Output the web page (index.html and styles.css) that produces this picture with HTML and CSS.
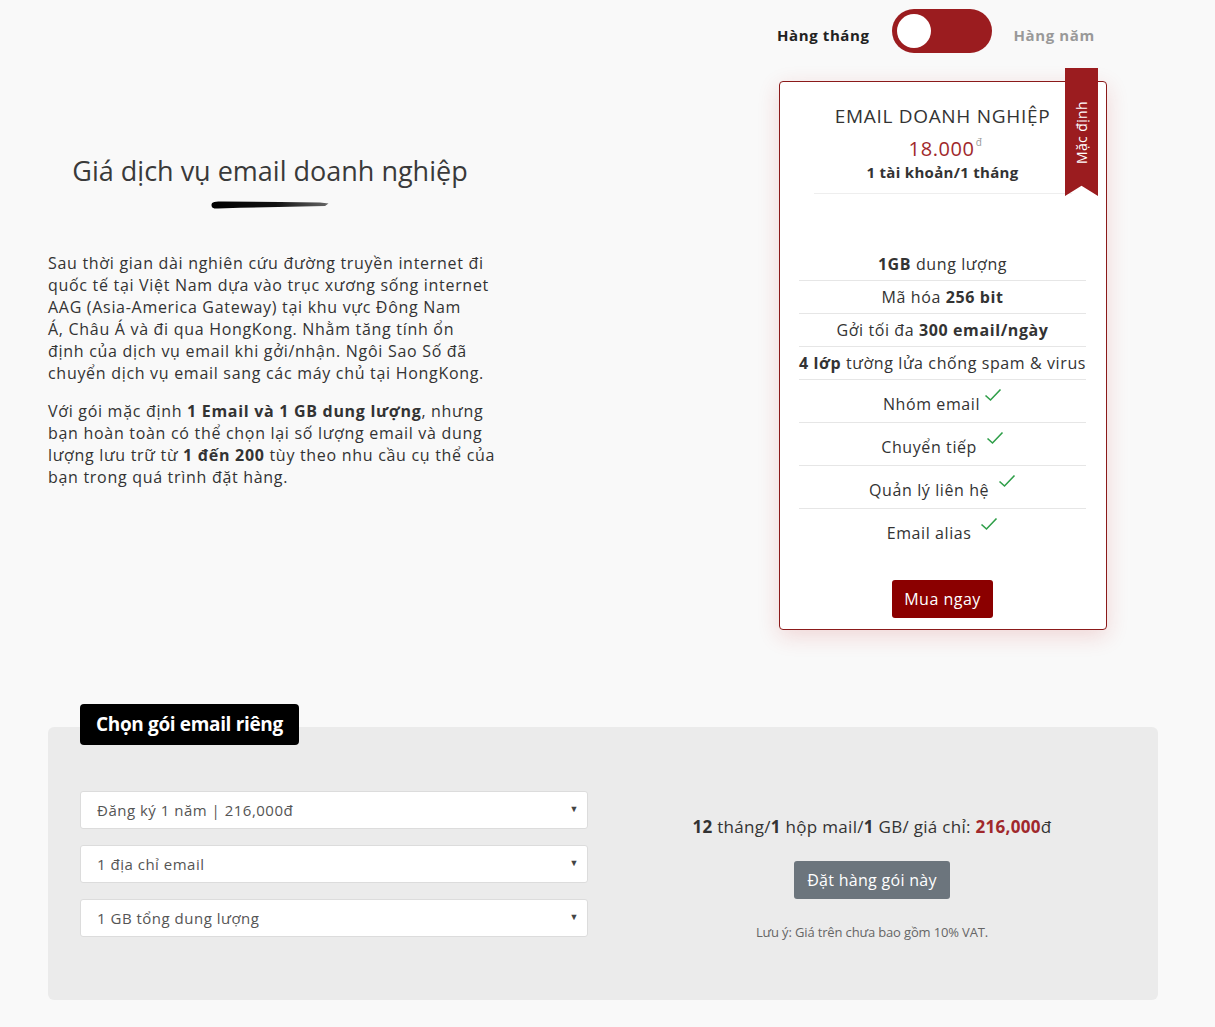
FILE: index.html
```html
<!DOCTYPE html>
<html lang="vi">
<head>
    <meta charset="UTF-8">
    <meta name="viewport" content="width=device-width, initial-scale=1.0">
    <title>Giá dịch vụ email doanh nghiệp</title>
    <link rel="stylesheet" href="styles.css">
</head>
<body>

    <div class="page">
        <div class="top">
            <div class="intro">
                <h2 class="intro-title">Giá dịch vụ email doanh nghiệp</h2>
                <svg class="brush" width="120" height="10" viewBox="0 0 120 10">
                    <defs>
                        <linearGradient id="fade" x1="0" x2="1" y1="0" y2="0">
                            <stop offset="0" stop-color="#000"/>
                            <stop offset="0.55" stop-color="#111"/>
                            <stop offset="1" stop-color="#666"/>
                        </linearGradient>
                    </defs>
                    <path d="M1.5 5 C1.5 2 5 1.6 14 1.6 L70 2 L110 2.4 L118.5 3.4 L115 6 L80 6.8 L30 7.8 L8 8.6 C3 8.8 1.5 7.6 1.5 5 Z" fill="url(#fade)"/>
                </svg>

                <div class="intro-text">
                    <p>Sau thời gian dài nghiên cứu đường truyền internet đi<br>
                    quốc tế tại Việt Nam dựa vào trục xương sống internet<br>
                    AAG (Asia-America Gateway) tại khu vực Đông Nam<br>
                    Á, Châu Á và đi qua HongKong. Nhằm tăng tính ổn<br>
                    định của dịch vụ email khi gởi/nhận. Ngôi Sao Số đã<br>
                    chuyển dịch vụ email sang các máy chủ tại HongKong.</p>
                    <p>Với gói mặc định <b>1 Email và 1 GB dung lượng</b>, nhưng<br>
                    bạn hoàn toàn có thể chọn lại số lượng email và dung<br>
                    lượng lưu trữ từ <b>1 đến 200</b> tùy theo nhu cầu cụ thể của<br>
                    bạn trong quá trình đặt hàng.</p>
                </div>
            </div>

            <div class="pricing">
                <div class="period-switch">
                    <span class="period active">Hàng tháng</span>
                    <span class="switch"><span class="knob"></span></span>
                    <span class="period">Hàng năm</span>
                </div>

                <div class="plan-card">
                    <div class="ribbon"><span>Mặc định</span></div>
                    <h3 class="plan-name">EMAIL DOANH NGHIỆP</h3>
                    <div class="plan-price">18.000<sup>đ</sup></div>
                    <div class="plan-unit">1 tài khoản/1 tháng</div>
                    <hr>

                    <ul class="features">
                        <li><b>1GB</b> dung lượng</li>
                        <li>Mã hóa <b>256 bit</b></li>
                        <li>Gởi tối đa <b>300 email/ngày</b></li>
                        <li><b>4 lớp</b> tường lửa chống spam &amp; virus</li>
                        <li class="check">Nhóm email<svg class="tick" width="18" height="14" viewBox="0 0 18 14"><path d="M1.5 7.5 L6.5 12 L16.5 1.5" fill="none" stroke="#2e9e48" stroke-width="1.6"/></svg></li>
                        <li class="check">Chuyển tiếp <svg class="tick" width="18" height="14" viewBox="0 0 18 14"><path d="M1.5 7.5 L6.5 12 L16.5 1.5" fill="none" stroke="#2e9e48" stroke-width="1.6"/></svg></li>
                        <li class="check">Quản lý liên hệ <svg class="tick" width="18" height="14" viewBox="0 0 18 14"><path d="M1.5 7.5 L6.5 12 L16.5 1.5" fill="none" stroke="#2e9e48" stroke-width="1.6"/></svg></li>
                        <li class="check">Email alias <svg class="tick" width="18" height="14" viewBox="0 0 18 14"><path d="M1.5 7.5 L6.5 12 L16.5 1.5" fill="none" stroke="#2e9e48" stroke-width="1.6"/></svg></li>
                    </ul>

                    <button class="buy-btn">Mua ngay</button>
                </div>
            </div>
        </div>

        <div class="custom-panel">
            <div class="panel-tab">Chọn gói email riêng</div>
            <div class="panel-body">
                <div class="options">
                    <div class="select-box">
                        <select>
                            <option>Đăng ký 1 năm | 216,000đ</option>
                            <option>Đăng ký 2 năm | 432,000đ</option>
                        </select>
                    </div>
                    <div class="select-box">
                        <select>
                            <option>1 địa chỉ email</option>
                            <option>2 địa chỉ email</option>
                        </select>
                    </div>
                    <div class="select-box">
                        <select>
                            <option>1 GB tổng dung lượng</option>
                            <option>2 GB tổng dung lượng</option>
                        </select>
                    </div>
                </div>

                <div class="summary">
                    <p class="summary-line"><b>12</b> tháng/<b>1</b> hộp mail/<b>1</b> GB/ giá chỉ: <b class="red">216,000</b>đ</p>
                    <button class="order-btn">Đặt hàng gói này</button>
                    <p class="note">Lưu ý: Giá trên chưa bao gồm 10% VAT.</p>
                </div>
            </div>
        </div>
    </div>

</body>
</html>
```

FILE: styles.css
```css
body {
    margin: 0;
    background: #f9f9f9;
    font-family: "Open Sans", Lato, sans-serif;
    color: #333;
    letter-spacing: 0.6px;
}
.page {
    width: 1110px;
    margin-left: 48px;
    padding-top: 9px;
    padding-bottom: 30px;
}
.top {
    display: flex;
}
.intro {
    width: 444px;
    text-align: center;
}
.intro-title {
    margin: 145px 0 0;
    font-size: 27px;
    font-weight: 400;
    line-height: 34px;
    letter-spacing: 0;
    color: #3a3a3a;
}
.brush {
    display: block;
    margin: 12px auto 0;
}
.intro-text {
    margin-top: 42px;
    text-align: left;
    white-space: nowrap;
    font-size: 16px;
    line-height: 22px;
    letter-spacing: 0.7px;
    color: #333;
}
.intro-text p {
    margin: 0 0 16px;
}
.pricing {
    width: 328px;
    margin-left: auto;
    margin-right: 51px;
}
.period-switch {
    display: flex;
    align-items: center;
    gap: 22px;
    margin-left: -2px;
}
.period {
    margin-top: 8px;
    font-size: 15px;
    font-weight: 700;
    color: #999;
}
.period.active {
    color: #222;
}
.switch {
    width: 100px;
    height: 44px;
    border-radius: 22px;
    background: #9b1c1f;
    position: relative;
}
.knob {
    position: absolute;
    left: 5px;
    top: 5px;
    width: 34px;
    height: 34px;
    border-radius: 50%;
    background: #fff;
}
.plan-card {
    position: relative;
    margin-top: 28px;
    background: #fff;
    border: 1px solid #8b1a1a;
    border-radius: 4px;
    box-shadow: 0 6px 22px rgba(200, 30, 30, 0.16);
    padding: 20px 20px 11px 19px;
    text-align: center;
}
.ribbon {
    position: absolute;
    top: -14px;
    right: 8px;
    width: 33px;
    height: 128px;
    background: #9b1c1f;
    clip-path: polygon(0 0, 100% 0, 100% 100%, 50% 92%, 0 100%);
    display: flex;
    align-items: center;
    justify-content: center;
}
.ribbon span {
    color: #fff;
    font-size: 14px;
    letter-spacing: 0.4px;
    white-space: nowrap;
    transform: rotate(-90deg);
}
.plan-name {
    margin: 0;
    font-size: 19px;
    font-weight: 400;
    line-height: 28px;
    letter-spacing: 0.7px;
    color: #333;
}
.plan-price {
    font-size: 20px;
    line-height: 24px;
    color: #a0282b;
    margin-left: 6px;
}
.plan-price sup {
    font-size: 10px;
    color: #999;
    vertical-align: 10px;
    margin-left: 1px;
}
.plan-unit {
    font-size: 15px;
    font-weight: 700;
    line-height: 22px;
    letter-spacing: 0.3px;
    color: #333;
}
.plan-card hr {
    border: none;
    border-top: 1px solid #eee;
    margin: 10px 14px 0 15px;
}
.features {
    list-style: none;
    margin: 54px 0 0;
    padding: 0;
    font-size: 16px;
    color: #333;
}
.features li {
    height: 32px;
    line-height: 32px;
    border-bottom: 1px solid #e6e6e6;
    white-space: nowrap;
}
.features li.check {
    height: 42px;
    line-height: 48px;
}
.features li:last-child {
    border-bottom: none;
}
.tick {
    vertical-align: 8px;
    margin-left: 4px;
}
.buy-btn {
    margin-top: 29px;
    height: 38px;
    padding: 0 12px;
    background: #8b0000;
    color: #fff;
    border: none;
    border-radius: 3px;
    font-family: inherit;
    font-size: 16px;
    letter-spacing: 0.5px;
}
.custom-panel {
    margin-top: 97px;
    background: #ebebeb;
    border-radius: 6px;
    padding: 0 32px 60px;
}
.panel-tab {
    width: fit-content;
    position: relative;
    top: -23px;
    height: 41px;
    line-height: 41px;
    padding: 0 16px;
    background: #000;
    color: #fff;
    font-size: 19px;
    font-weight: 700;
    letter-spacing: -0.35px;
    border-radius: 4px;
}
.panel-body {
    display: flex;
    align-items: flex-start;
    margin-top: 23px;
}
.options {
    width: 508px;
    display: flex;
    flex-direction: column;
    gap: 16px;
}
.select-box {
    position: relative;
}
.select-box select {
    width: 100%;
    height: 38px;
    padding: 0 16px;
    border: 1px solid #dcdcdc;
    border-radius: 3px;
    background: #fff;
    font-family: inherit;
    font-size: 15px;
    letter-spacing: 0.5px;
    color: #555;
    appearance: none;
    -webkit-appearance: none;
}
.select-box::after {
    content: "▼";
    position: absolute;
    right: 9px;
    top: 11px;
    font-size: 9px;
    color: #444;
    pointer-events: none;
}
.summary {
    flex: 1;
    padding-left: 30px;
    padding-top: 26px;
    text-align: center;
}
.summary-line {
    margin: 0;
    font-size: 17px;
    line-height: 20px;
    letter-spacing: 0.3px;
    color: #333;
}
.red {
    color: #a0282b;
}
.order-btn {
    margin-top: 24px;
    height: 38px;
    padding: 0 13px;
    background: #6c757d;
    color: #fff;
    border: none;
    border-radius: 3px;
    font-family: inherit;
    font-size: 16px;
    letter-spacing: 0.3px;
}
.note {
    margin: 25px 0 0;
    font-size: 13px;
    line-height: 16px;
    letter-spacing: -0.15px;
    color: #666;
}
```
